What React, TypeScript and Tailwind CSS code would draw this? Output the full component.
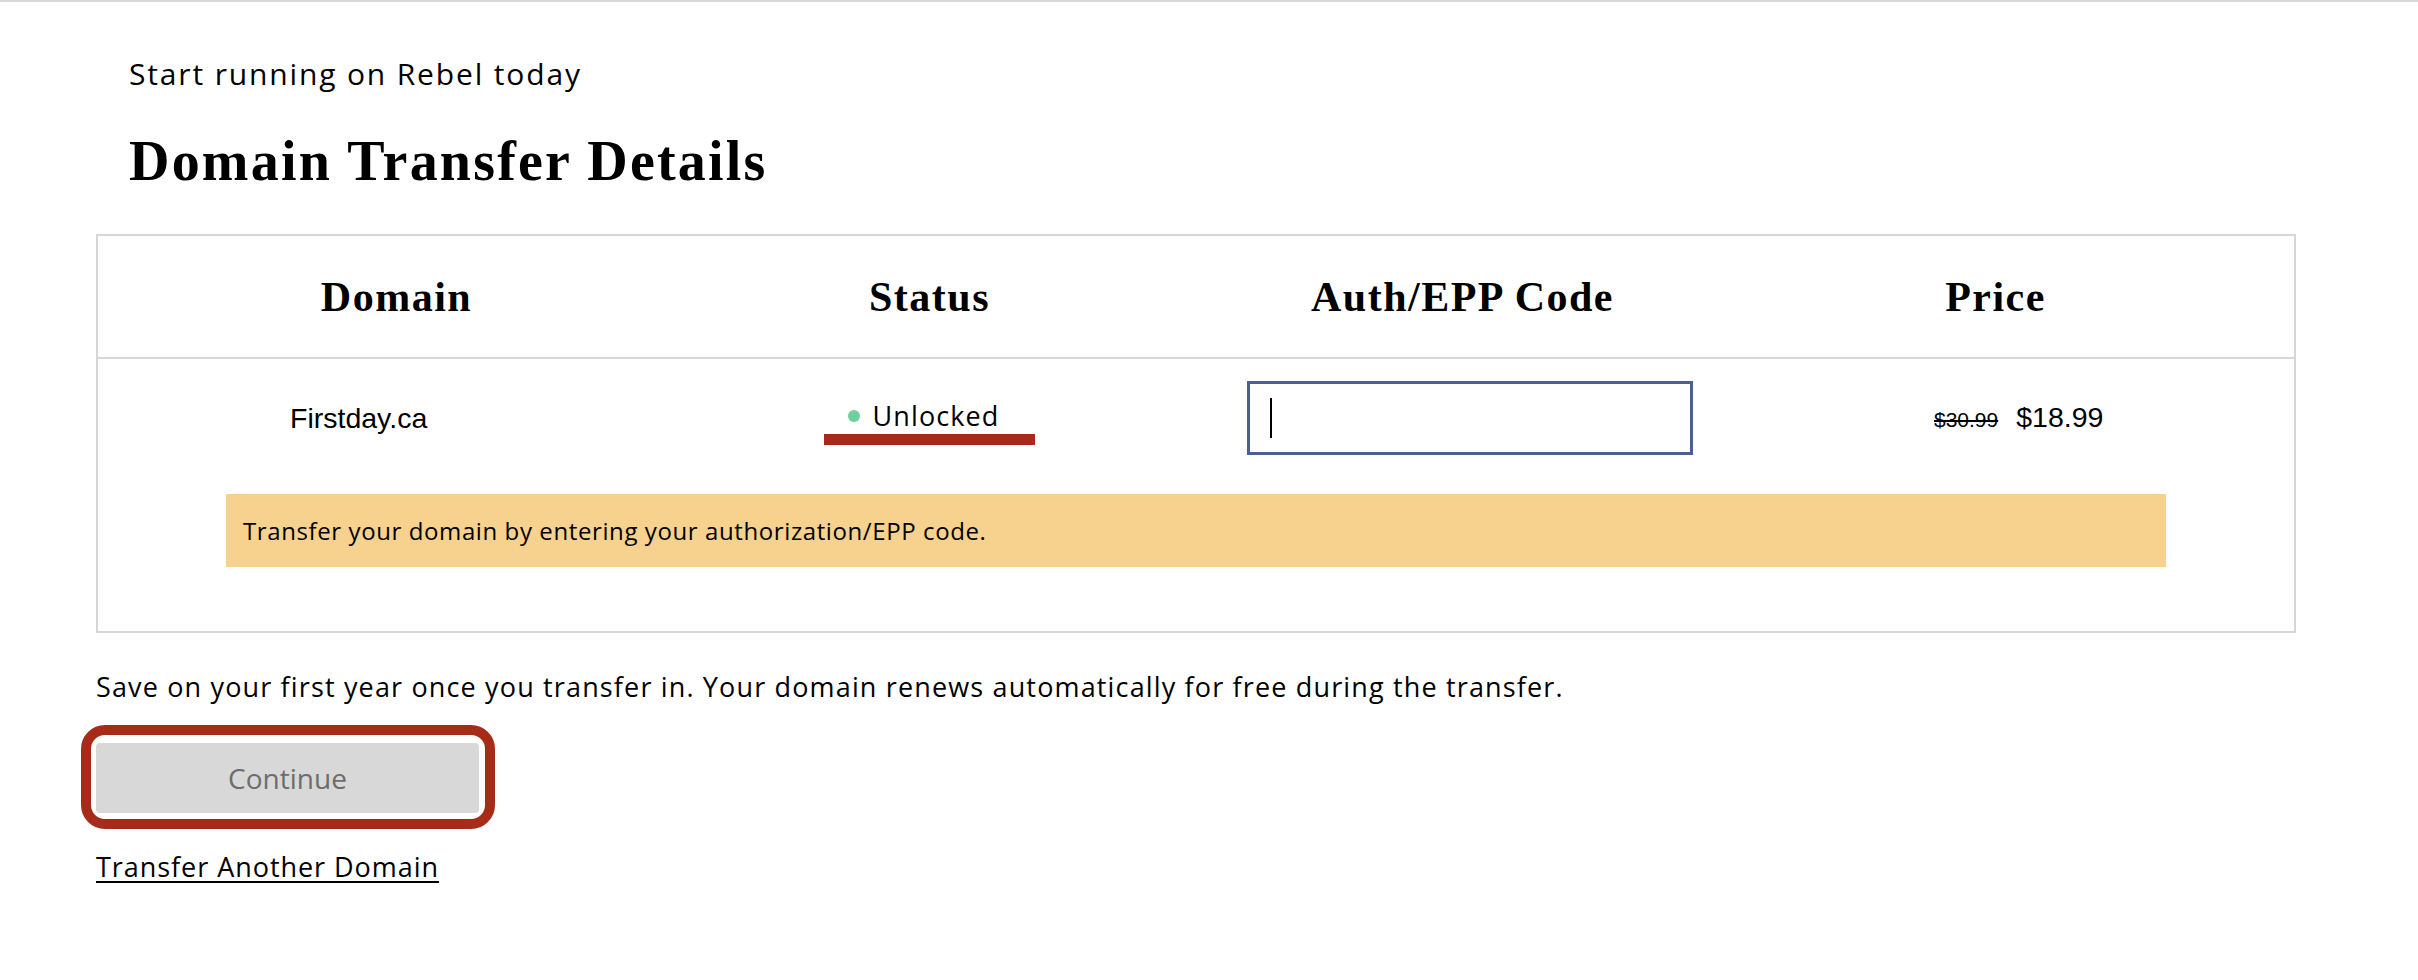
const sans = "font-['Open_Sans',sans-serif]";
const serif = "font-['Liberation_Serif',serif]";
const arial = "font-['Liberation_Sans',Arial,sans-serif]";

const columns = ["Domain", "Status", "Auth/EPP Code", "Price"];

export default function App() {
  return (
    <div className="min-h-[980px] w-full bg-white text-black">
      <div className="h-[2px] w-full bg-[#d9d9d9]" />
      <div className="pl-[96px]">
        <div className="pl-[33px] pt-[54px]">
          <p className={`${sans} text-[30px] leading-[36px] tracking-[1.85px]`}>
            Start running on Rebel today
          </p>
          <h1 className={`${serif} mt-[36px] text-[56px] leading-[66px] font-bold tracking-[2.2px]`}>
            Domain Transfer Details
          </h1>
        </div>

        <div className="mt-[40px] w-[2200px] border-2 border-[#d6d6d6]">
          <div className="grid h-[123px] grid-cols-4 items-center border-b-2 border-[#d6d6d6] px-[32px]">
            {columns.map((c) => (
              <div key={c} className={`${serif} text-center text-[42px] leading-[48px] font-bold tracking-[1.5px]`}>
                {c}
              </div>
            ))}
          </div>

          <div className="grid grid-cols-4 items-start px-[32px] pt-[22px]">
            <div className={`${arial} mt-[21px] pl-[160px] text-[28.5px] leading-[32px]`}>Firstday.ca</div>

            <div className="mt-[19px] flex flex-col items-center">
              <div className="mr-[12px] flex items-center gap-[13px]">
                <span className="size-[12px] rounded-full bg-[#6fcf9f]" />
                <span className={`${sans} text-[27px] leading-[32px] tracking-[1.1px]`}>Unlocked</span>
              </div>
              <div className="mt-[2px] h-[11px] w-[211px] bg-[#a62c19]" />
            </div>

            <div className="pl-[51px]">
              <div className="flex h-[74px] w-[446px] items-center border-[3px] border-[#4a6090] bg-white pl-[20px]">
                <span className="h-[40px] w-[2px] bg-black" />
              </div>
            </div>

            <div className={`${arial} mt-[20px] flex items-baseline pl-[205px] leading-[32px]`}>
              <span className="text-[21px] line-through">$30.99</span>
              <span className="ml-[18px] text-[28.5px]">$18.99</span>
            </div>
          </div>

          <div className={`${sans} mx-[128px] mt-[39px] mb-[64px] flex h-[73px] items-center bg-[#f7d18e] px-[17px] text-[24px] tracking-[0.6px]`}>
            Transfer your domain by entering your authorization/EPP code.
          </div>
        </div>

        <p className={`${sans} mt-[36px] text-[27px] leading-[36px] tracking-[1.15px]`}>
          Save on your first year once you transfer in. Your domain renews automatically for free during the transfer.
        </p>

        <div className="mt-[20px] -ml-[15px] w-fit rounded-[24px] border-[10px] border-[#a62c19] bg-white pt-[8px] pr-[6px] pb-[6px] pl-[5px]">
          <button className={`${sans} flex h-[70px] w-[383px] items-center justify-center rounded-[4px] bg-[#d8d8d8] text-[28px] text-[#6d6d6d]`}>
            Continue
          </button>
        </div>

        <a href="#" className={`${sans} mt-[20px] inline-block text-[27px] leading-[36px] tracking-[0.95px] underline decoration-2 underline-offset-[4px]`}>
          Transfer Another Domain
        </a>
      </div>
    </div>
  );
}
